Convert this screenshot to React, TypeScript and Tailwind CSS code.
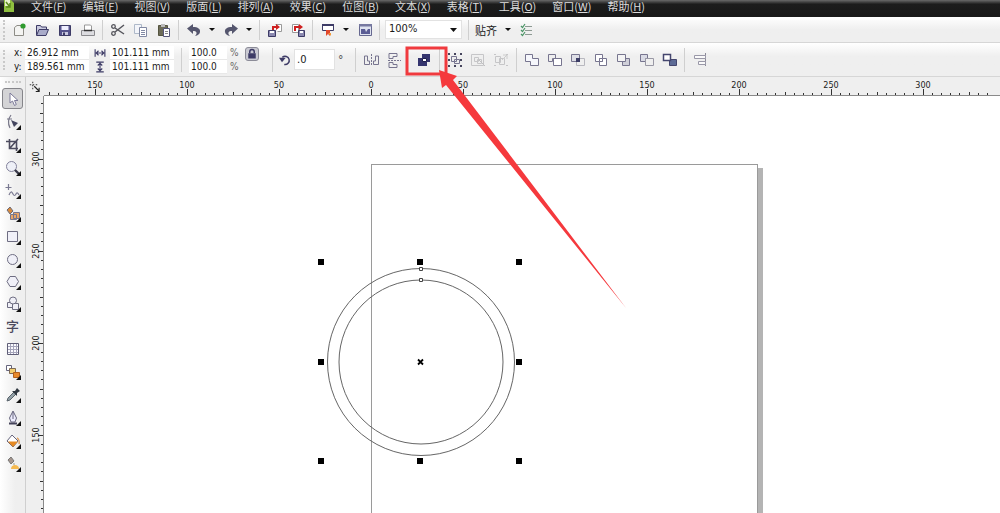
import { useEffect, useState, type ReactNode } from "react";

const menus = [
  ["文件", "F"],
  ["编辑", "E"],
  ["视图", "V"],
  ["版面", "L"],
  ["排列", "A"],
  ["效果", "C"],
  ["位图", "B"],
  ["文本", "X"],
  ["表格", "T"],
  ["工具", "O"],
  ["窗口", "W"],
  ["帮助", "H"],
];

const INK = "#3d3b66";
const LINE = "#77758f";

function Svg({ children, size = 16 }: { children: ReactNode; size?: number }) {
  return (
    <svg width={size} height={size} viewBox="0 0 16 16" fill="none" className="shrink-0">
      {children}
    </svg>
  );
}

function IconButton({ label, children }: { label: string; children: ReactNode }) {
  return (
    <button aria-label={label} className="flex h-6 w-[23px] shrink-0 items-center justify-center">
      <Svg>{children}</Svg>
    </button>
  );
}

function Caret({ label }: { label: string }) {
  return (
    <button aria-label={label} className="flex h-6 w-[14px] shrink-0 items-center justify-center">
      <svg width="6" height="3" viewBox="0 0 6 3">
        <path d="M0 0h6L3 3z" fill="#111" />
      </svg>
    </button>
  );
}

function Sep({ tall }: { tall?: boolean }) {
  return (
    <div className="flex w-[7px] shrink-0 justify-center">
      <div className={`w-px bg-[#cfcfcf] ${tall ? "h-6" : "h-5"}`} />
    </div>
  );
}

function Grip() {
  return <div className="ml-[3px] h-5 w-[3px] shrink-0 border-l-2 border-dotted border-[#c9c9c9]" />;
}

function Field({ label, value }: { label: string; value: string }) {
  return (
    <input
      aria-label={label}
      defaultValue={value}
      className="h-[14px] w-full min-w-0 border-b border-[#e8e8e8] bg-white px-[2px] text-[#1a1a1a] outline-none"
    />
  );
}

function FileToolbar() {
  return (
    <div className="flex h-[26px] items-center border-b border-[#d6d6d6] bg-linear-to-b from-white to-[#efefef] to-50%">
      <Grip />
      <div className="flex items-center pl-px">
        <IconButton label="新建">
          <path d="M3.500 5.500 6 3.500h6.500v10h-9z" fill="#f4f4f2" stroke="#8d8c86" />
          <circle cx="12" cy="4" r="2.600" fill="#2e9a2e" />
        </IconButton>
        <IconButton label="打开">
          <path d="M2.500 13V3.500h4l1 1.500h5v2" fill="#c9cadf" stroke={INK} />
          <path d="M2.500 13.500 5 7.500h9.500l-2.500 6z" fill="#a9abc9" stroke={INK} />
        </IconButton>
        <IconButton label="保存">
          <path d="M2.500 3.500h11v10h-11z" fill="#55538c" stroke={INK} />
          <path d="M4.500 4h7v4h-7z" fill="#eef" />
          <path d="M5 10h6v3H5z" fill="#c9c9e0" />
          <path d="M6 10.500h2V13H6z" fill={INK} />
        </IconButton>
        <IconButton label="打印">
          <path d="M4.500 8V3h6l1 1v4" fill="#fff" stroke="#999" />
          <path d="M1.500 8.500h13v5h-13z" fill="#dcdce0" stroke="#8a8a8e" />
          <path d="M4 8.500h8" stroke="#333" strokeWidth="1.500" />
        </IconButton>
        <Sep />
        <IconButton label="剪切">
          <path d="m5 6 9 6M5 10l9-7" stroke="#55555c" strokeWidth="1.500" />
          <circle cx="3.500" cy="4.500" r="1.800" stroke="#55555c" strokeWidth="1.300" />
          <circle cx="3.500" cy="11.500" r="1.800" stroke="#55555c" strokeWidth="1.300" />
        </IconButton>
        <IconButton label="复制">
          <path d="M1.500 2.500h7v9h-7z" fill="#f3f5fa" stroke="#aeb9c9" />
          <path d="M6.500 5.500h7v9h-7z" fill="#fff" stroke="#8189a3" />
          <path d="M8 8.500h4M8 10.500h4M8 12.500h4" stroke="#8189a3" />
        </IconButton>
        <IconButton label="粘贴">
          <path d="M2.500 3.500h9v10h-9z" fill="#6d6c58" stroke="#55543f" />
          <path d="M5 2h4v3H5z" fill="#bbb" />
          <path d="M7.500 6.500h6v8h-6z" fill="#fff" stroke="#55567a" />
          <path d="M9 9.500h3M9 11.500h3" stroke="#888" />
        </IconButton>
        <Sep />
        <IconButton label="撤消">
          <path d="M1 6.500 7 2v3c5 0 7.500 2 7 5-.3 2-2 3.500-5 4 3-3 1.500-5-2-5v3z" fill="#55566e" />
        </IconButton>
        <Caret label="撤消列表" />
        <IconButton label="重做">
          <path d="M15 6.500 9 2v3c-5 0-7.500 2-7 5 .3 2 2 3.500 5 4-3-3-1.500-5 2-5v3z" fill="#55566e" />
        </IconButton>
        <Caret label="重做列表" />
        <Sep />
        <IconButton label="导入">
          <path d="M8.500 2.500h6v7h-4" fill="#fff" stroke="#999" />
          <path d="M5 8V4h4V2l4 3-4 3V6H7v2z" fill="#cf2020" />
          <path d="M1.500 8.500h7v6h-7z" fill="#8b89b0" stroke={INK} />
          <path d="M3 9h4v2H3z" fill="#fff" />
        </IconButton>
        <IconButton label="导出">
          <path d="M2.500 2.500h6v8h-6z" fill="#fff" stroke="#999" />
          <path d="M4 9V4h5V2l4 3-4 3V6H6v3z" fill="#cf2020" />
          <path d="M8.500 8.500h6v6h-6z" fill="#8b89b0" stroke={INK} />
          <path d="M10 9h3v2h-3z" fill="#fff" />
        </IconButton>
        <Sep />
        <IconButton label="应用程序启动器">
          <path d="M2.500 2.500h11v6h-11z" fill="#fff" stroke={INK} />
          <path d="M2 2h12v2H2z" fill={INK} />
          <path d="M6 8h4v6l-2-2-2 2z" fill="#e2482c" />
          <path d="M8 11h3v3z" fill="#f29a3a" />
        </IconButton>
        <Caret label="启动器列表" />
        <IconButton label="欢迎屏幕">
          <path d="M2.500 2.500h12v11h-12z" fill="#dfe3f0" stroke="#666890" />
          <path d="M2 2h13v2.500H2z" fill="#7779a0" />
          <path d="M4 7h4l1 3 2-3h2v5H4z" fill="#5a5c94" />
        </IconButton>
        <Sep />
      </div>
      <div className="relative ml-[3px]">
        <select
          aria-label="缩放级别"
          defaultValue="100%"
          className="block h-[17px] w-[75px] appearance-none bg-white px-[3px] text-[11px] text-[#1a1a1a] ring-1 ring-[#e2e2e2]"
        >
          <option>100%</option>
        </select>
        <svg width="7" height="4" viewBox="0 0 7 4" className="pointer-events-none absolute top-[7px] right-1">
          <path d="M0 0h7L3.500 4z" fill="#111" />
        </svg>
      </div>
      <div className="ml-1 flex items-center">
        <Sep />
        <button className="mr-1 ml-[3px] font-['Noto_Sans_CJK_SC',sans-serif] text-[11px] leading-4">贴齐</button>
        <Caret label="贴齐列表" />
        <IconButton label="选项">
          <path d="M6 4.500h7M6 8.500h7M6 12.500h7" stroke="#8d9a93" />
          <path d="m2 4 1.500 1.500L6 2M2 8l1.500 1.500L6 6M2 12l1.500 1.500L6 10" stroke="#4b9567" strokeWidth="1.200" />
        </IconButton>
      </div>
    </div>
  );
}

function PropertyBar() {
  return (
    <div className="flex h-[34px] items-center border-b border-[#d6d6d6] bg-linear-to-b from-white to-[#efefef] to-40%">
      <Grip />
      <div className="ml-2 w-[11px] shrink-0 leading-[14px]">
        <div>x:</div>
        <div>y:</div>
      </div>
      <div className="flex w-[64px] shrink-0 flex-col">
        <Field label="x" value="26.912 mm" />
        <Field label="y" value="189.561 mm" />
      </div>
      <div className="flex w-[21px] shrink-0 flex-col items-center gap-[2px]">
        <Svg size={12}>
          <path d="M1.500 3v10M14.500 3v10M3 8h10M6 5 3 8l3 3M10 5l3 3-3 3" stroke={INK} strokeWidth="1.500" />
        </Svg>
        <Svg size={12}>
          <path d="M3 1.500h10M3 14.500h10M8 3v10M5 6l3-3 3 3M5 10l3 3 3-3" stroke={INK} strokeWidth="1.500" />
        </Svg>
      </div>
      <div className="flex w-[64px] shrink-0 flex-col">
        <Field label="宽度" value="101.111 mm" />
        <Field label="高度" value="101.111 mm" />
      </div>
      <div className="ml-1 flex">
        <Sep tall />
      </div>
      <div className="ml-1 flex w-[38px] shrink-0 flex-col">
        <Field label="水平缩放" value="100.0" />
        <Field label="垂直缩放" value="100.0" />
      </div>
      <div className="w-[15px] shrink-0 pl-[3px] leading-[14px] text-[#666]">
        <div>%</div>
        <div>%</div>
      </div>
      <button
        aria-label="锁定比率"
        className="mb-[11px] ml-[3px] flex h-[14px] w-[14px] shrink-0 items-center justify-center rounded-[3px] border border-[#8c8c98] bg-[#c9c9d2]"
      >
        <Svg size={12}>
          <path d="M5 7V5a3 3 0 0 1 6 0v2" stroke={INK} strokeWidth="2" />
          <path d="M3 7h10v7H3z" fill={INK} />
        </Svg>
      </button>
      <div className="ml-[10px] flex items-center">
        <Sep tall />
        <div className="ml-[2px] flex w-[14px] justify-center">
          <Svg size={12}>
            <path d="M4.500 4.500A5.500 5.500 0 1 1 7 14" stroke={INK} strokeWidth="2" />
            <path d="M0 5h9l-5 6z" fill={INK} />
          </Svg>
        </div>
        <input
          aria-label="旋转角度"
          defaultValue=".0"
          className="ml-[3px] h-[19px] w-[39px] bg-white px-[2px] text-[11px] text-[#1a1a1a] ring-1 ring-[#e2e2e2] outline-none"
        />
        <span className="ml-1 w-[14px] text-[12px] text-[#555]">°</span>
        <Sep tall />
      </div>
      <div className="flex items-center">
        <IconButton label="水平镜像">
          <path d="M8.500 2v12" stroke={LINE} strokeDasharray="2 1" />
          <path d="M1.500 4v8.500h5V9h-2V4zM15.500 4v8.500h-5V9h2V4z" stroke={LINE} />
        </IconButton>
        <IconButton label="垂直镜像">
          <path d="M2 8.500h13" stroke={LINE} strokeDasharray="2 1" />
          <path d="M3 1.500h8v3H7v2H3zM3 15.500h8v-3H7v-2H3z" stroke={LINE} />
        </IconButton>
      </div>
      <div className="ml-[7px] flex items-center">
        <IconButton label="合并">
          <path d="M6 2h8v8h-3v4H2V6h4z" fill="#35356f" />
          <path d="M6.500 6.500h4v3h-4z" fill="#fff" stroke="#20204e" />
        </IconButton>
        <div className="ml-px flex">
          <Sep tall />
        </div>
        <IconButton label="群组">
          <path d="M4.500 4.500h5v5h-5zM7.500 7.500h5v4h-5z" fill="#eee" stroke={LINE} />
          <path d="M1 1h2v2H1zM7 1h2v2H7zM13 1h2v2h-2zM1 7h2v2H1zM13 7h2v2h-2zM1 13h2v2H1zM7 13h2v2H7zM13 13h2v2h-2z" fill="#45445c" />
        </IconButton>
        <IconButton label="取消群组">
          <path d="M1.500 2.500h12v11h-12zM4.500 5.500h4v4h-4zM7.500 7.500h4v4h-4z" stroke="#c6c6c8" />
          <path d="m9 8 6 6" stroke="#c0c0c2" />
        </IconButton>
        <IconButton label="取消全部群组">
          <path d="M2.500 4.500h5v6h-5zM6.500 6.500h5v6h-5z" stroke="#c6c6c8" />
          <path d="M1 2h2v1H1zM13 2h2v1h-2zM1 13h2v1H1zM13 13h2v1h-2z" fill="#c6c6c8" />
          <path d="m9 8 5-5M10 3h4v4" stroke="#ccc" />
        </IconButton>
        <div className="flex pl-px">
          <Sep tall />
        </div>
        <IconButton label="焊接">
          <path d="M1.500 2.500h7v4h6v7h-8v-4h-5z" fill="#f6f7fc" stroke={LINE} />
        </IconButton>
        <IconButton label="修剪">
          <path d="M1.500 2.500h7v4h-3v3h-4z" fill="#eee" stroke={LINE} />
          <path d="M6.500 6.500h8v7h-8z" fill="#fff" stroke={LINE} />
        </IconButton>
        <IconButton label="相交">
          <path d="M1.500 2.500h8v7h-8z" fill="#dedfe6" stroke={LINE} />
          <path d="M6.500 6.500h8v7h-8z" stroke="#b8b8bf" />
          <path d="M6 6h4v4H6z" fill="#3c3d66" />
        </IconButton>
        <IconButton label="简化">
          <path d="M2.500 2.500h7v7h-7zM6.500 6.500h7v7h-7z" fill="#fff" stroke={LINE} />
          <path d="M6.500 6.500h3v3h-3z" fill="#fff" stroke={LINE} />
        </IconButton>
        <IconButton label="移除后面对象">
          <path d="M9 6.500h4.500v7h-7V10" fill="#cfcfd8" stroke={LINE} />
          <path d="M1.500 2.500h8v7h-8z" fill="#f4f4f4" stroke={LINE} />
        </IconButton>
        <IconButton label="移除前面对象">
          <path d="M1.500 2.500h7v4h-2v3h-5z" fill="#d9dae4" stroke={LINE} />
          <path d="M6.500 6.500h8v7h-8z" fill="#efefef" stroke="#9998a5" />
        </IconButton>
        <IconButton label="创建边界">
          <path d="M7.500 7.500h7v6h-7z" fill="#5d6b96" stroke="#44466e" />
          <path d="M1.500 2.500h7v6h-7z" fill="#fff" stroke="#44466e" strokeWidth="1.500" />
        </IconButton>
        <Sep tall />
        <IconButton label="对齐与分布">
          <path d="M13.500 1v13" stroke="#8a8997" />
          <path d="M2.500 3.500h11v3h-11zM6.500 9.500h7v3h-7z" fill="#fafafa" stroke="#9a98a8" />
        </IconButton>
      </div>
    </div>
  );
}

type Tool = { name: string; flyout?: boolean; icon: ReactNode };

const drawTools: Tool[] = [
  {
    name: "选择",
    icon: <path d="M5 2v10l2.500-2 2 4.500 1.800-1L9.500 9.500H13z" fill="#fff" stroke="#7c7a99" />,
  },
  {
    name: "形状",
    flyout: true,
    icon: (
      <>
        <path d="M6 1C3 5 3 10 5 14M2 5h5" stroke="#777688" strokeWidth="1.200" />
        <path d="m6 6 7 3-4 4z" fill="#44465f" />
      </>
    ),
  },
  {
    name: "裁剪",
    flyout: true,
    icon: <path d="M4.500 2v9.500H13M1 4.500h10.500V14M13 2 5 11" stroke="#4c4b5e" strokeWidth="1.600" />,
  },
  {
    name: "缩放",
    flyout: true,
    icon: (
      <>
        <circle cx="6.500" cy="6.500" r="5" fill="#eef0f7" stroke="#83829c" />
        <path d="m10 10 5 5" stroke="#3a3a4a" strokeWidth="2.400" />
      </>
    ),
  },
  {
    name: "手绘",
    flyout: true,
    icon: <path d="M3.500 1v6M.5 4.500h6M4 12c2-5 3-3 4-1s2 2 3 0 2-1 3 1" stroke="#7b7a92" strokeWidth="1.200" />,
  },
  {
    name: "智能填充",
    flyout: true,
    icon: (
      <>
        <path d="m2 4 3-3 3 4-3 3z" fill="#d88a3c" stroke="#6b6b7a" />
        <path d="M5.500 8.500h6v5h-6zM8.500 6.500h6v6h-6z" fill="#e9a566" stroke="#77768c" />
      </>
    ),
  },
  {
    name: "矩形",
    flyout: true,
    icon: <path d="M2.500 2.500h10v10h-10z" fill="#f0f0f8" stroke="#6e6d82" />,
  },
  {
    name: "椭圆形",
    flyout: true,
    icon: <circle cx="7.500" cy="7.500" r="5" fill="#f0f0f8" stroke="#6e6d82" />,
  },
];

const shapeTools: Tool[] = [
  {
    name: "多边形",
    flyout: true,
    icon: <path d="M5 2.500h5.500l3 5-3 5H5l-3-5z" fill="#f0f0f8" stroke="#6e6d82" />,
  },
  {
    name: "基本形状",
    flyout: true,
    icon: (
      <>
        <path d="M2.500 6.500h5v5h-5zM7.500 7.500h6v6h-6z" fill="#f0f0f8" stroke="#6e6d82" />
        <circle cx="8" cy="4.500" r="3.500" fill="#f0f0f8" stroke="#6e6d82" />
      </>
    ),
  },
  { name: "文本", icon: null },
];

const fillTools: Tool[] = [
  {
    name: "表格",
    icon: (
      <>
        <path d="M2.500 2.500h11v11h-11z" fill="#fafafe" stroke="#5f5e77" />
        <path d="M5.500 3v10M8.500 3v10M11.500 3v10M3 5.500h10M3 8.500h10M3 11.500h10" stroke="#a5a4ba" />
      </>
    ),
  },
  {
    name: "调和",
    flyout: true,
    icon: (
      <>
        <path d="M1.500 1.500h5v5h-5z" fill="#fff" stroke="#66657d" />
        <path d="M4.500 4.500h6v5h-6z" fill="#f3cf72" stroke="#7d6a55" />
        <path d="M8.500 8.500h6v5h-6z" fill="#e88a2c" stroke="#b3601a" />
      </>
    ),
  },
  {
    name: "滴管",
    flyout: true,
    icon: (
      <>
        <path d="m2 14 1-3 6-6 2 2-6 6z" fill="#93a1a8" stroke="#59636b" />
        <path d="M7 4h3l2-3 3 3-3 2v3z" fill="#2f3740" />
      </>
    ),
  },
  {
    name: "轮廓笔",
    flyout: true,
    icon: (
      <>
        <path d="M8 1 4.500 8 6 12h4l1.500-4zM8 2v7" fill="#eef" stroke="#66657d" />
        <path d="M4 13.500h8" stroke="#44435a" strokeWidth="2" />
      </>
    ),
  },
  {
    name: "填充",
    flyout: true,
    icon: (
      <>
        <path d="m2 8 5-6 6 6-5 6z" fill="#fff" stroke="#66657d" />
        <path d="M3 8.500h10L8 14z" fill="#e58a24" />
        <path d="M12 5c2 1 2.500 4 2 6" stroke="#e0a060" strokeWidth="1.500" />
      </>
    ),
  },
  {
    name: "交互式填充",
    flyout: true,
    icon: (
      <>
        <path d="m3 4 3-3 3 4-3 3z" fill="#a6968e" stroke="#777" />
        <path d="M9 7v2" stroke="#998" />
        <path d="M6 13c0-3 2-4 4-4s4 1 4 4z" fill="#f5b950" />
      </>
    ),
  },
];

function ToolButton({ tool, height, active }: { tool: Tool; height: string; active?: boolean }) {
  return (
    <button aria-label={tool.name} className={`relative flex w-full items-center justify-center ${height}`}>
      <span
        className={`flex h-[21px] w-[21px] items-center justify-center rounded-[3px] ${
          active ? "border border-[#85858a] bg-[#d4d4d6]" : ""
        }`}
      >
        {tool.icon ? (
          <Svg>{tool.icon}</Svg>
        ) : (
          <span className="font-['Noto_Sans_CJK_SC',sans-serif] text-[13px] leading-5 font-medium text-[#4c4b5e]">字</span>
        )}
      </span>
      {tool.flyout && (
        <svg width="5" height="5" viewBox="0 0 5 5" className="absolute right-1 bottom-[3px]">
          <path d="M5 0v5H0z" fill="#111" />
        </svg>
      )}
    </button>
  );
}

function Toolbox() {
  return (
    <aside className="w-[26px] shrink-0 border-r border-[#cfcfcf] bg-linear-to-r from-white to-[#efefef] to-60%">
      <div className="mx-auto mt-[4px] mb-[4px] h-[2px] w-4 border-t-2 border-dotted border-[#c9c9c9]" />
      {drawTools.map((tool, i) => (
        <ToolButton key={tool.name} tool={tool} height="h-[23px]" active={i === 0} />
      ))}
      {shapeTools.map((tool) => (
        <ToolButton key={tool.name} tool={tool} height="h-[22px]" />
      ))}
      {fillTools.map((tool) => (
        <ToolButton key={tool.name} tool={tool} height="h-[23px]" />
      ))}
    </aside>
  );
}

// 50 units are 92px on both rulers
const TICK = 9.2;

function useWindowSize() {
  const [size, setSize] = useState({ width: window.innerWidth, height: window.innerHeight });

  useEffect(() => {
    const onResize = () => setSize({ width: window.innerWidth, height: window.innerHeight });
    window.addEventListener("resize", onResize);
    return () => window.removeEventListener("resize", onResize);
  }, []);

  return size;
}

function getTicks(origin: number, length: number) {
  const first = -Math.floor(origin / TICK);
  const count = Math.max(0, Math.floor(length / TICK));
  return Array.from({ length: count }, (_, i) => first + i);
}

function RulerTop() {
  const { width } = useWindowSize();
  return (
    <svg className="h-[19px] w-full border-b border-[#8a8a8a]" aria-label="水平标尺">
      {getTicks(327, width - 44).map((n) => {
        const x = Math.floor(327 + n * TICK);
        const major = n % 10 === 0;
        return (
          <g key={n}>
            <rect x={x} y={major ? 12 : n % 5 === 0 ? 15 : 16} width="1" height="7" fill="#333" />
            {major && (
              <text x={x} y="11" textAnchor="middle" fontSize="9" fill="#222">
                {Math.abs(n * 5)}
              </text>
            )}
          </g>
        );
      })}
    </svg>
  );
}

function RulerLeft() {
  const { height } = useWindowSize();
  return (
    <svg className="h-full w-[18px] border-r border-[#8a8a8a]" aria-label="垂直标尺">
      {getTicks(63, height - 96).map((n) => {
        const y = Math.floor(63 + n * TICK);
        const major = n % 10 === 0;
        return (
          <g key={n}>
            <rect x={major ? 12 : n % 5 === 0 ? 14 : 15} y={y} width="7" height="1" fill="#333" />
            {major && (
              <text transform={`translate(13 ${y}) rotate(-90)`} textAnchor="middle" fontSize="9" fill="#222">
                {Math.abs(300 - n * 5)}
              </text>
            )}
          </g>
        );
      })}
    </svg>
  );
}

function Drawing() {
  const handles = [276, 375, 474].flatMap((x) => [166, 266, 365].map((y) => [x, y]));
  return (
    <svg className="absolute inset-0 h-full w-full" aria-label="绘图">
      <rect x="714" y="72" width="5" height="900" fill="#b4b4b4" />
      <rect x="327.500" y="68.500" width="386" height="900" fill="none" stroke="#9a9a9a" />
      <circle cx="377" cy="266" r="93.500" fill="none" stroke="#666" />
      <circle cx="377" cy="266" r="82" fill="none" stroke="#666" />
      {handles
        .filter(([x, y]) => !(x === 375 && y === 266))
        .map(([x, y]) => (
          <rect key={`${x}-${y}`} x={x - 2} y={y - 3} width="6" height="6" fill="#000" />
        ))}
      <path d="m374 263.500 5 5m0-5-5 5" stroke="#000" strokeWidth="1.800" />
      <path d="M375.500 171.500h3v3h-3zM375.500 182.500h3v3h-3z" fill="#fff" stroke="#444" />
    </svg>
  );
}

export default function App() {
  return (
    <div className="relative flex h-screen flex-col bg-[#efefef] font-['DejaVu_Sans_Condensed','Noto_Sans_CJK_SC',sans-serif] text-[10px] text-[#1a1a1a]">
      <nav className="flex h-[17px] shrink-0 items-start bg-linear-to-b from-[#6a6a6a] via-[#1c1c1c] via-25% to-[#181818] font-['Noto_Sans_CJK_SC',sans-serif] text-[11px] text-[#dcdcdc]">
        <svg width="12" height="13" viewBox="0 0 12 13" className="ml-[3px]">
          <path d="M1 0h7l3 3v9H1z" fill="#8fbf3f" />
          <path d="M2 0h5v6H2z" fill="#e9f3cf" />
          <path d="m3 2 4 5M7 3v4H3" stroke="#5c8a1d" strokeWidth="1.500" fill="none" />
        </svg>
        <div className="ml-4 flex gap-4">
          {menus.map(([text, key]) => (
            <a key={key} href={`#${key}`} className="leading-[12px] whitespace-nowrap">
              {text}(<span className="underline">{key}</span>)
            </a>
          ))}
        </div>
      </nav>
      <FileToolbar />
      <PropertyBar />
      <div className="flex min-h-0 flex-1">
        <Toolbox />
        <div className="flex min-w-0 flex-1 flex-col">
          <div className="flex">
            <div className="flex w-[18px] shrink-0 items-center justify-center">
              <Svg size={12}>
                <path d="M5 1v10M1 5h10" stroke="#333" strokeWidth="1.300" strokeDasharray="2 2" />
                <path d="m7 7 6 6M13.500 9v5H9" stroke="#222" strokeWidth="1.500" />
              </Svg>
            </div>
            <div className="min-w-0 flex-1">
              <RulerTop />
            </div>
          </div>
          <div className="flex min-h-0 flex-1">
            <RulerLeft />
            <main className="relative min-w-0 flex-1 bg-white">
              <Drawing />
            </main>
          </div>
        </div>
      </div>
      <svg className="pointer-events-none absolute inset-0 h-full w-full">
        <rect x="407" y="48" width="39" height="26" fill="none" stroke="#f03a3e" strokeWidth="3" />
        <path d="m439 70 3 18 4-3 180 223L453 80l4-4z" fill="#f5393d" />
      </svg>
    </div>
  );
}
